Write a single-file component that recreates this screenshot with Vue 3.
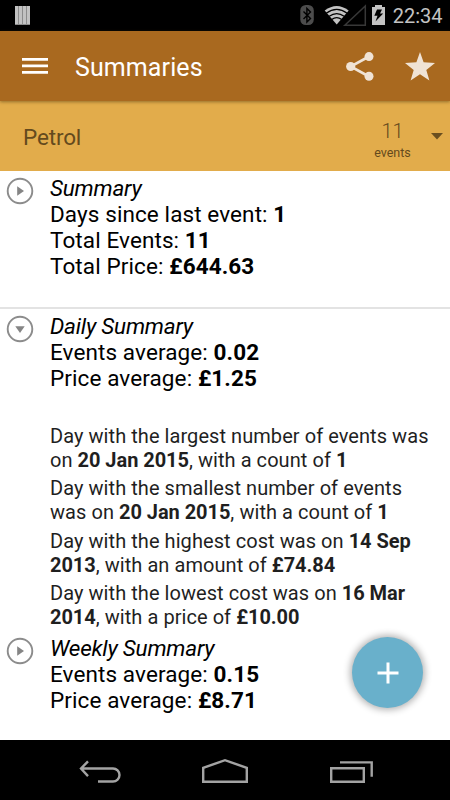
<script setup>
const sections = [
  {
    id: 'summary',
    title: 'Summary',
    open: false,
    stats: [
      { label: 'Days since last event:', value: '1' },
      { label: 'Total Events:', value: '11' },
      { label: 'Total Price:', value: '£644.63' },
    ],
    details: [],
  },
  {
    id: 'daily',
    title: 'Daily Summary',
    open: true,
    stats: [
      { label: 'Events average:', value: '0.02' },
      { label: 'Price average:', value: '£1.25' },
    ],
    details: [
      { lead: 'Day with the largest number of events was on', date: '20 Jan 2015', mid: ', with a count of', value: '1' },
      { lead: 'Day with the smallest number of events was on', date: '20 Jan 2015', mid: ', with a count of', value: '1' },
      { lead: 'Day with the highest cost was on', date: '14 Sep 2013', mid: ', with an amount of', value: '£74.84' },
      { lead: 'Day with the lowest cost was on', date: '16 Mar 2014', mid: ', with a price of', value: '£10.00' },
    ],
  },
  {
    id: 'weekly',
    title: 'Weekly Summary',
    open: false,
    stats: [
      { label: 'Events average:', value: '0.15' },
      { label: 'Price average:', value: '£8.71' },
    ],
    details: [],
  },
]
</script>

<template>
  <div class="screen">
    <div class="status">
      <svg class="bars" width="15" height="19" viewBox="0 0 15 19">
        <rect width="15" height="19" fill="#8c8c8c" />
        <path d="M0 0h3v18H0zM4 0h3v18H4zM8 0h3v18H8zM12 0h3v18h-3z" fill="#c2c2c2" />
      </svg>
      <svg class="signals" width="90" height="31" viewBox="0 0 90 31">
        <rect x="0.3" y="5" width="13.5" height="20" rx="5.5" fill="#4c4c4c" />
        <path d="M3.500 11.500l7 7-3.600 3.500V8.500l3.600 3.500-7 7" fill="none" stroke="#000" stroke-width="1.400" />
        <path d="M24.700 10.500Q36.700 1.500 48.700 10.500L36.700 24.500z" fill="#c3c3c3" />
        <path d="M26.200 13.200Q36.700 5.600 47.200 13.200M29.200 16.300Q36.700 10.800 44.200 16.300M31.700 19.500Q36.700 15.900 41.700 19.500" fill="none" stroke="#000" stroke-width="1.200" />
        <path d="M44.800 25.300L65.300 6v19.300z" fill="none" stroke="#383838" stroke-width="1.500" />
        <path d="M72 7h3V5h7v2h3v18H72z" fill="#c3c3c3" />
        <path d="M77 9.500h5l-2 4h3.200l-7.700 8 2-5.700h-3.200z" fill="#000" />
      </svg>
      <span class="clock">22:34</span>
    </div>

    <header class="toolbar">
      <svg class="menu" width="26" height="16" viewBox="0 0 26 16">
        <path d="M0 1.400h26M0 7.900h26M0 14.300h26" stroke="#fff" stroke-width="2.700" />
      </svg>
      <h1>Summaries</h1>
      <svg class="share" width="28" height="29" viewBox="0 0 28 29">
        <path d="M23 4.500L4.700 14.500 23 24.500" fill="none" stroke="#f0e3d5" stroke-width="2.600" />
        <circle cx="23" cy="4.600" r="4.500" fill="#f0e3d5" />
        <circle cx="4.700" cy="14.500" r="4.600" fill="#f0e3d5" />
        <circle cx="23" cy="24.300" r="4.500" fill="#f0e3d5" />
      </svg>
      <svg class="star" width="30" height="29" viewBox="0 0 30 29">
        <path d="M15 0l3.600 10.200L30 11l-8.700 6.900L24.400 28.500 15 22.300l-9.400 6.200L8.700 17.900 0 11l11.400-.8z" fill="#f0e3d5" />
      </svg>
    </header>

    <div class="category">
      <span class="name">Petrol</span>
      <div class="count">
        <span class="number">11</span>
        <span class="unit">events</span>
      </div>
      <svg class="caret" width="12" height="7" viewBox="0 0 12 7">
        <path d="M0 0h12L6 6.500z" fill="#6a4f20" />
      </svg>
    </div>

    <main>
      <section v-for="s in sections" :key="s.id" :class="s.id">
        <svg class="toggle" width="28" height="28" viewBox="0 0 28 28">
          <circle cx="14" cy="14" r="12.300" fill="none" stroke="#8c8c8c" stroke-width="1.900" />
          <path :d="s.open ? 'M9.300 11.200h9.400L14 18z' : 'M11.200 9.300v9.400L18 14z'" fill="#858585" />
        </svg>
        <div class="text">
          <h2>{{ s.title }}</h2>
          <p v-for="stat in s.stats" :key="stat.label" class="stat">{{ stat.label }} <b>{{ stat.value }}</b></p>
          <div v-if="s.open" class="details">
            <p v-for="d in s.details" :key="d.lead">{{ d.lead }} <b>{{ d.date }}</b>{{ d.mid }} <b>{{ d.value }}</b></p>
          </div>
        </div>
      </section>
      <button class="fab" aria-label="Add">
        <svg width="22" height="22" viewBox="0 0 22 22">
          <path d="M11 .5v21M.5 11h21" stroke="#fff" stroke-width="3" />
        </svg>
      </button>
    </main>

    <nav>
      <svg width="450" height="60" viewBox="0 0 450 60" fill="none" stroke="#a3a3a3" stroke-width="2.400">
        <path d="M88 21.300l-7 7.200 7 7.600M81 28.500h32a6.500 6.500 0 0 1 0 13H98" />
        <path d="M203.200 41.700V27.800L225 20.200l21.800 7.600v13.900z" />
        <path d="M331.200 28.200h32.600v13.600h-32.600zM340 22.400h31.700V36.700" />
      </svg>
    </nav>
  </div>
</template>

<style>
body {
  margin: 0;
  background: #fff;
}
</style>

<style scoped>
.screen {
  width: 450px;
  height: 800px;
  display: flex;
  flex-direction: column;
  overflow: hidden;
  background: #fff;
  font-family: Roboto, "Liberation Sans", sans-serif;
  color: #000;
}
h1, h2, p {
  margin: 0;
  font-weight: 400;
}
svg {
  display: block;
  flex: none;
}
.status {
  flex: none;
  height: 31px;
  background: #000;
  display: flex;
}
.bars {
  margin: 6px 0 0 15px;
}
.signals {
  margin-left: 270px;
}
.clock {
  margin-left: 2.700px;
  font-size: 20px;
  line-height: 33px;
  color: #c3c3c3;
}
.toolbar {
  flex: none;
  height: 70px;
  background: #a9691f;
  display: flex;
  align-items: center;
  position: relative;
  box-shadow: 0 1px 3px rgba(80, 60, 20, 0.55);
}
.menu {
  margin-left: 22px;
}
h1 {
  margin-left: 27px;
  width: 271px;
  font-size: 25px;
  line-height: 30px;
  padding-top: 4px;
  letter-spacing: 0.1px;
  color: #fff;
}
.star {
  margin-left: 31px;
}
.category {
  flex: none;
  height: 70px;
  background: #e2ac4b;
  display: flex;
  align-items: flex-start;
  color: #644a1d;
}
.name {
  width: 338px;
  padding: 22px 0 0 23px;
  box-sizing: border-box;
  font-size: 22.5px;
  line-height: 28px;
  letter-spacing: -0.15px;
}
.count {
  width: 110px;
  margin-left: -0.5px;
  display: flex;
  flex-direction: column;
  align-items: center;
}
.number {
  padding-top: 18px;
  font-size: 20px;
  line-height: 24px;
  font-weight: 300;
}
.unit {
  font-size: 12.5px;
  line-height: 20px;
}
.caret {
  margin: 32px 0 0 -16.500px;
}
main {
  flex: none;
  height: 569px;
  position: relative;
}
section {
  display: flex;
  align-items: flex-start;
  box-sizing: border-box;
  padding-left: 6px;
}
.summary {
  height: 138px;
  padding-top: 4px;
  border-bottom: 2px solid #e3e3e3;
}
.daily {
  height: 322px;
  padding-top: 4px;
}
.weekly {
  padding-top: 4px;
}
.toggle {
  margin-top: 2px;
}
.text {
  margin-left: 16px;
  width: 390px;
}
h2 {
  font-size: 22.5px;
  line-height: 26px;
  font-style: italic;
  letter-spacing: -0.22px;
}
.stat {
  font-size: 22.5px;
  line-height: 26.200px;
  letter-spacing: 0.1px;
}
.details {
  padding-top: 33.600px;
  color: #1f1f1f;
}
.details p {
  font-size: 20px;
  line-height: 23.700px;
  padding-bottom: 5px;
  letter-spacing: 0.06px;
}
.details b {
  letter-spacing: -0.05px;
}
.fab {
  position: absolute;
  left: 352px;
  top: 466px;
  width: 71px;
  height: 71px;
  padding: 0;
  border: 0;
  border-radius: 50%;
  background: #69b0cb;
  display: grid;
  place-items: center;
  box-shadow: 0 0 7px 2px rgba(0, 0, 0, 0.3);
}
nav {
  flex: none;
  height: 60px;
  background: #000;
}
</style>
